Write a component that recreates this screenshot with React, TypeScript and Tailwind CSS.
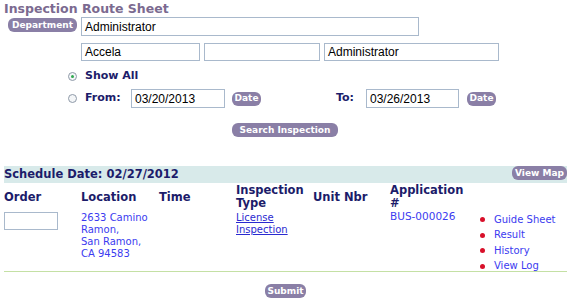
import React from "react";

const font = { fontFamily: '"DejaVu Sans", Verdana, sans-serif' };

function Btn({ children, className = "" }: { children: React.ReactNode; className?: string }) {
  return (
    <span
      className={`inline-flex items-center justify-center whitespace-nowrap h-[14px] rounded-[6px] bg-[#8a7fa6] text-white font-bold text-[9px] leading-none px-[6px] ${className}`}
    >
      {children}
    </span>
  );
}

function Input({ value = "", className = "" }: { value?: string; className?: string }) {
  return (
    <div
      className={`border border-[#a9b9cc] bg-white flex items-center pl-[3px] text-[12px] text-black ${className}`}
      style={{ fontFamily: '"Liberation Sans", Arial, sans-serif' }}
    >
      {value}
    </div>
  );
}

function Radio({ checked }: { checked?: boolean }) {
  return (
    <span className="w-[9px] h-[9px] rounded-full border border-[#8f9aa8] bg-[#f4f6f8] flex items-center justify-center">
      {checked && <span className="w-[3px] h-[3px] rounded-full bg-[#2fa84f]" />}
    </span>
  );
}

export default function App() {
  return (
    <div className="w-[567px] h-[299px] bg-white overflow-hidden relative" style={font}>
      <div className="pl-[4px] pt-[1px] text-[12.5px] leading-[16px] font-bold text-[#7b6a90]">Inspection Route Sheet</div>

      <div className="flex items-start mt-[0px]">
        <Btn className="ml-[8px] mt-[1px] w-[69px]">Department</Btn>
        <Input value="Administrator" className="ml-[4px] w-[338px] h-[19px]" />
      </div>

      <div className="flex mt-[7px] ml-[81px] gap-[4px]">
        <Input value="Accela" className="w-[119px] h-[18px]" />
        <Input className="w-[116px] h-[18px]" />
        <Input value="Administrator" className="w-[175px] h-[18px]" />
      </div>

      <div className="flex items-center mt-[9px] ml-[68px] h-[12px]">
        <Radio checked />
        <span className="ml-[8px] text-[11px] font-bold text-[#1c1c6a]">Show All</span>
      </div>

      <div className="flex items-center mt-[7px] ml-[68px] h-[19px]">
        <Radio />
        <span className="ml-[8px] w-[46px] text-[11px] font-bold text-[#1c1c6a]">From:</span>
        <Input value="03/20/2013" className="w-[94px] h-[19px]" />
        <Btn className="ml-[7px] w-[29px] px-0">Date</Btn>
        <span className="ml-[75px] w-[30px] text-[11px] font-bold text-[#1c1c6a]">To:</span>
        <Input value="03/26/2013" className="w-[93px] h-[19px]" />
        <Btn className="ml-[8px] w-[29px] px-0">Date</Btn>
      </div>

      <div className="flex mt-[15px] ml-[232px]">
        <Btn className="w-[106px] px-0">Search Inspection</Btn>
      </div>

      <div className="mt-[29px] ml-[4px] h-[17px] bg-[#d8eaea] flex items-center justify-between">
        <span className="text-[11.5px] font-bold text-[#1c1c6a] leading-none">Schedule Date: 02/27/2012</span>
        <Btn className="w-[55px] px-0 self-start">View Map</Btn>
      </div>

      <div className="flex mt-[1px] text-[11.5px] font-bold text-[#1c1c6a] leading-[13px] h-[26px]">
        <div className="w-[81px] pl-[4px] pt-[7px]">Order</div>
        <div className="w-[78px] pt-[7px]">Location</div>
        <div className="w-[77px] pt-[7px]">Time</div>
        <div className="w-[77px]">Inspection<br />Type</div>
        <div className="w-[77px] pt-[7px]">Unit Nbr</div>
        <div>Application<br />#</div>
      </div>

      <div className="flex text-[10px] leading-[12px] h-[61px]">
        <div className="w-[81px] pl-[4px] pt-[2px]">
          <Input className="w-[54px] h-[18px]" />
        </div>
        <div className="w-[78px] text-[#3b3bf0] pt-[2px]">
          2633 Camino<br />Ramon,<br />San Ramon,<br />CA 94583
        </div>
        <div className="w-[77px]" />
        <div className="w-[77px] text-[#2a2ad0] leading-[12px] pt-[2px]">
          <span className="underline">License</span>
          <br />
          <span className="underline">Inspection</span>
        </div>
        <div className="w-[77px]" />
        <div className="w-[90px] text-[10.5px] text-[#3b3bf0]">BUS-000026</div>
        <div className="text-[#3b3bf0] pt-[2px]">
          {["Guide Sheet", "Result", "History", "View Log"].map((t) => (
            <div key={t} className="flex items-center h-[15.5px]">
              <span className="w-[5px] h-[5px] rounded-full bg-[#d8102a] mr-[9px]" />
              <span className="leading-none">{t}</span>
            </div>
          ))}
        </div>
      </div>

      <div className="ml-[4px] h-[1px] bg-[#c4e0a4]" />

      <div className="flex mt-[12px] ml-[265px]">
        <Btn className="w-[41px] px-0">Submit</Btn>
      </div>
    </div>
  );
}
